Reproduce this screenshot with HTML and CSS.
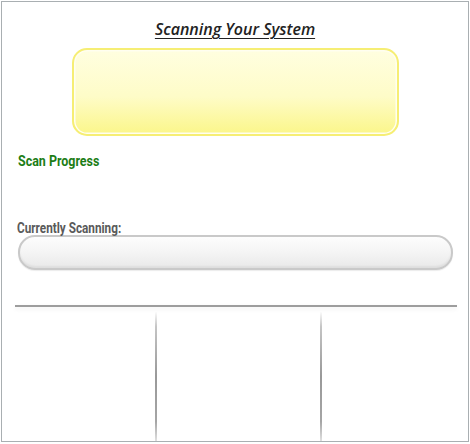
FILE: index.html
```html
<!DOCTYPE html>
<html>
<head>
<meta charset="utf-8">
<link rel="stylesheet" href="styles.css">
</head>
<body>
<div class="frame">
  <h1 class="title">Scanning Your System</h1>
  <div class="notice"></div>
  <div class="label-row"><span class="label-green">Scan Progress</span></div>
  <div class="label-row grey-row"><span class="label-grey">Currently Scanning:</span></div>
  <div class="bar"></div>
  <div class="rule"></div>
  <div class="cols">
    <div class="col"></div>
    <div class="col sep"></div>
    <div class="col sep"></div>
  </div>
</div>
</body>
</html>
```
FILE: styles.css
```css
html, body {
  margin: 0;
  padding: 0;
  background: #fff;
}
.frame {
  margin: 1px;
  width: 466px;
  height: 439px;
  border: 1px solid #a9afb2;
  display: flex;
  flex-direction: column;
  overflow: hidden;
}
.title {
  margin: 16px 0 0;
  text-align: center;
  font-family: "Open Sans", sans-serif;
  font-style: italic;
  font-weight: 600;
  font-size: 16px;
  line-height: 22px;
  color: #222;
  text-decoration: underline;
  text-decoration-thickness: 1px;
  text-underline-offset: 3px;
}
.notice {
  align-self: center;
  margin-top: 8px;
  margin-left: 1px;
  width: 323px;
  height: 84px;
  border: 2px solid #f6ee74;
  border-radius: 15px;
  box-shadow: inset 0 0 0 1.5px #fffef0;
  background: linear-gradient(#fffee0 0%, #fefcc8 55%, #fbf68a 100%);
}
.label-row {
  margin: 16px 0 0 16px;
  height: 17px;
}
.grey-row {
  margin: 50px 0 0 15px;
  height: 16px;
}
.label-green,
.label-grey {
  display: inline-block;
  transform-origin: left center;
  font-family: Roboto, sans-serif;
  font-weight: bold;
  white-space: nowrap;
}
.label-green {
  font-size: 15px;
  line-height: 17px;
  color: #1c7d16;
  transform: scaleX(0.83);
}
.label-grey {
  font-size: 14px;
  line-height: 16px;
  color: #5a5a5a;
  transform: scaleX(0.84);
}
.bar {
  margin: 0 0 0 16px;
  width: 431px;
  height: 31px;
  border: 2px solid #c9c9c9;
  border-radius: 17px;
  background: linear-gradient(#fdfdfd 0%, #f4f4f4 50%, #e9e9e9 100%);
  box-shadow: inset 0 -2px 2px rgba(0,0,0,0.05), 0 1px 1px rgba(0,0,0,0.08);
}
.rule {
  margin: 35px 0 0 13px;
  width: 442px;
  height: 2px;
  background: #9d9d9d;
  box-shadow: 0 2px 4px rgba(0,0,0,0.08);
}
.cols {
  flex: 1;
  margin: 4px 0 0 13px;
  display: grid;
  grid-template-columns: 140px 165px 1fr;
}
.sep {
  position: relative;
}
.sep::before {
  content: "";
  position: absolute;
  left: 0;
  top: 0;
  bottom: 0;
  width: 2px;
  background: linear-gradient(#ffffff 0%, #c5c5c5 12%, #999 50%, #a5a5a5 85%, #e0e0e0 100%);
}
```
